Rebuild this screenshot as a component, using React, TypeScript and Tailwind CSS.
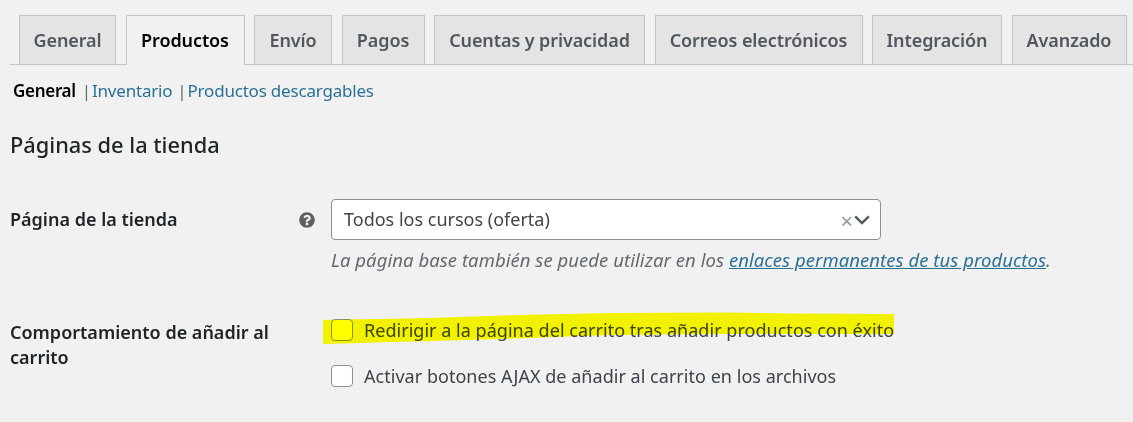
import { FaQuestionCircle } from 'react-icons/fa';

const tabs = [
  { label: 'General', width: 'w-[97px]' },
  { label: 'Productos', width: 'w-[119px]', active: true },
  { label: 'Envío', width: 'w-[78px]' },
  { label: 'Pagos', width: 'w-[83px]' },
  { label: 'Cuentas y privacidad', width: 'w-[211px]' },
  { label: 'Correos electrónicos', width: 'w-[208px]' },
  { label: 'Integración', width: 'w-[130px]' },
  { label: 'Avanzado', width: 'w-[115px]' },
];

const Tabs = () => (
  <div className="ml-[10px] mt-[15px] flex h-[50px] gap-[9.5px] border-b border-[#c3c4c7] pl-[9px]">
    {tabs.map((tab) => (
      <a
        key={tab.label}
        className={`flex items-center justify-center border border-[#c3c4c7] text-[18px] font-semibold tracking-[-0.1px] ${tab.width} ${
          tab.active
            ? 'h-[50px] border-b-0 bg-[#f1f1f1] text-black'
            : 'h-[49px] border-b-0 bg-[#e4e4e4] text-[#50575e]'
        }`}
      >
        {tab.label}
      </a>
    ))}
  </div>
);

const Checkbox = () => (
  <span className="h-[22px] w-[22px] shrink-0 rounded-[4px] border border-[#8c8f94] bg-white" />
);

export default function App() {
  return (
    <div className="relative h-[422px] w-[1133px] overflow-hidden bg-[#f1f1f1] font-['Noto_Sans',sans-serif] text-[#3c434a]">
      <Tabs />

      <div className="ml-[13px] mt-[13px] flex h-[25px] items-center text-[17px] tracking-[-0.2px]">
        <span className="font-semibold tracking-[-0.3px] text-black">General</span>
        <span className="ml-[6px] mr-[1px] text-[#646970]">|</span>
        <a className="text-[#2a7198]">Inventario</a>
        <span className="ml-[5px] mr-[1px] text-[#646970]">|</span>
        <a className="text-[#2a7198]">Productos descargables</a>
      </div>

      <h2 className="ml-[10px] mt-[27px] h-[30px] text-[21.8px] font-medium leading-[30px] text-[#1d2327]">
        Páginas de la tienda
      </h2>

      <div className="mt-[39px] flex">
        <div className="ml-[10px] w-[289px] pt-[8px] text-[18px] font-semibold leading-[24px] text-[#1d2327]">
          Página de la tienda
        </div>
        <FaQuestionCircle className="mt-[13px] h-[16px] w-[16px] text-[#5f6062]" />
        <div className="ml-[16px]">
          <div className="flex h-[41px] w-[550px] items-center rounded-[4px] border border-[#8c8f94] bg-white pl-[12px] pr-[10px] text-[18px] text-[#444]">
            <span className="flex-1">Todos los cursos (oferta)</span>
            <span className="text-[22px] leading-none text-[#999]">×</span>
            <svg viewBox="0 0 16 10" className="ml-[1px] h-[10px] w-[16px]" fill="none" stroke="#50575e" strokeWidth="2.4">
              <path d="M1.2 1.4 8 8l6.8-6.6" />
            </svg>
          </div>
          <p className="mt-[7px] whitespace-nowrap text-[18.5px] italic leading-[26px] tracking-[0.05px] text-[#646970]">
            La página base también se puede utilizar en los{' '}
            <a className="text-[#2a7198] underline">enlaces permanentes de tus productos</a>.
          </p>
        </div>
      </div>

      <div className="mt-[46px] flex">
        <div className="ml-[10px] w-[321px] pt-[1px] text-[18px] font-semibold leading-[25px] text-[#1d2327]">
          Comportamiento de añadir al
          <br />
          carrito
        </div>
        <div className="flex flex-col gap-[24px]">
          <label className="flex h-[22px] items-center gap-[11px] whitespace-nowrap text-[18px] tracking-[0.03px]">
            <Checkbox />
            Redirigir a la página del carrito tras añadir productos con éxito
          </label>
          <label className="flex h-[22px] items-center gap-[11px] whitespace-nowrap text-[18px] tracking-[0.03px]">
            <Checkbox />
            Activar botones AJAX de añadir al carrito en los archivos
          </label>
        </div>
      </div>

      {/* marcador amarillo encima del texto */}
      <svg className="pointer-events-none absolute left-0 top-0 mix-blend-multiply" width="1133" height="422">
        <path
          d="M323 320 L430 318 L520 315 L610 313 L725 312.5 L790 313.5 L894 314 L894 334 L790 334 L720 334 L610 335 L500 339 L430 341 L323 344 Z"
          fill="#ffff00"
        />
      </svg>
    </div>
  );
}
